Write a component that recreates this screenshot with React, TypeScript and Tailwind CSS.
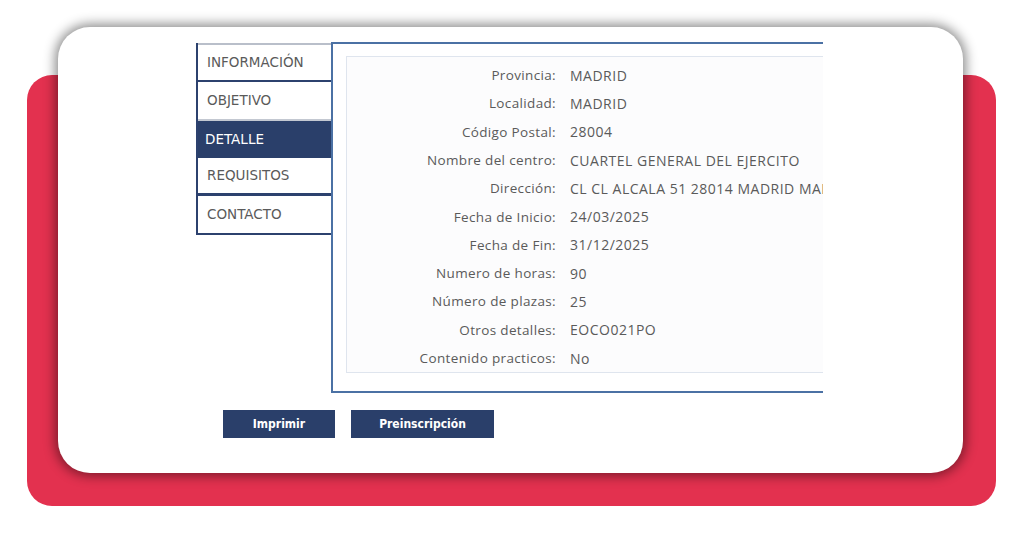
import React from "react";

const rows: [string, string][] = [
  ["Provincia:", "MADRID"],
  ["Localidad:", "MADRID"],
  ["Código Postal:", "28004"],
  ["Nombre del centro:", "CUARTEL GENERAL DEL EJERCITO"],
  ["Dirección:", "CL CL ALCALA 51 28014 MADRID MADRID"],
  ["Fecha de Inicio:", "24/03/2025"],
  ["Fecha de Fin:", "31/12/2025"],
  ["Numero de horas:", "90"],
  ["Número de plazas:", "25"],
  ["Otros detalles:", "EOCO021PO"],
  ["Contenido practicos:", "No"],
];

export default function App() {
  return (
    <div className="w-[1024px] h-[536px] bg-white grid overflow-hidden">
      <div className="[grid-area:1/1] ml-[27px] mt-[75px] w-[969px] h-[431px] rounded-[25px] bg-[#e3314f]" />
      <div className="[grid-area:1/1] ml-[58px] mt-[27px] w-[905px] h-[446px] rounded-[32px] bg-white shadow-[0_0_12px_3px_rgba(0,0,0,0.45)] pl-[138px] pt-[15px]">
        <div className="flex items-start">
          <div className="mt-[1px] w-[135px] flex flex-col border-l-2 border-[#2c416e] font-['DejaVu_Sans',sans-serif] text-[13.5px] text-[#5a5a5a]">
            <div className="h-[39px] border-t-2 border-t-[#b9bfca] border-b-2 border-b-[#2c416e] flex items-center pl-[9px]">INFORMACIÓN</div>
            <div className="h-[39px] border-b-2 border-b-[#c3c8d1] flex items-center pl-[9px]">OBJETIVO</div>
            <div className="h-[37px] bg-[#2a3f6a] text-white flex items-center pl-[7px]">DETALLE</div>
            <div className="h-[38px] border-b-[3px] border-b-[#2c416e] flex items-center pl-[9px]">REQUISITOS</div>
            <div className="h-[39px] border-b-2 border-b-[#2c416e] flex items-center pl-[9px]">CONTACTO</div>
          </div>
          <div className="w-[492px] border-t-2 border-l-2 border-b-2 border-[#4b71a4] pt-[12px] pl-[13px] pb-[18px] overflow-hidden">
            <div className="border border-r-0 border-[#dfe5ee] bg-[#fcfcfd] pt-[4px] font-['Open_Sans',sans-serif] text-[#5a5a5a]">
              {rows.map(([l, v]) => (
                <div key={l} className="h-[28.3px] flex items-center whitespace-nowrap">
                  <div className="w-[209px] shrink-0 text-right text-[13.5px] tracking-[0.35px]">{l}</div>
                  <div className="ml-[14px] text-[14px] tracking-[0.5px]">{v}</div>
                </div>
              ))}
            </div>
          </div>
        </div>
        <div className="flex gap-4 ml-[27px] mt-[17px] font-['DejaVu_Sans_Condensed','DejaVu_Sans',sans-serif] font-stretch-condensed font-bold text-[12px] text-white">
          <button className="w-[112px] h-[28px] bg-[#2a3f6a] flex items-center justify-center">Imprimir</button>
          <button className="w-[143px] h-[28px] bg-[#2a3f6a] flex items-center justify-center">Preinscripción</button>
        </div>
      </div>
    </div>
  );
}
